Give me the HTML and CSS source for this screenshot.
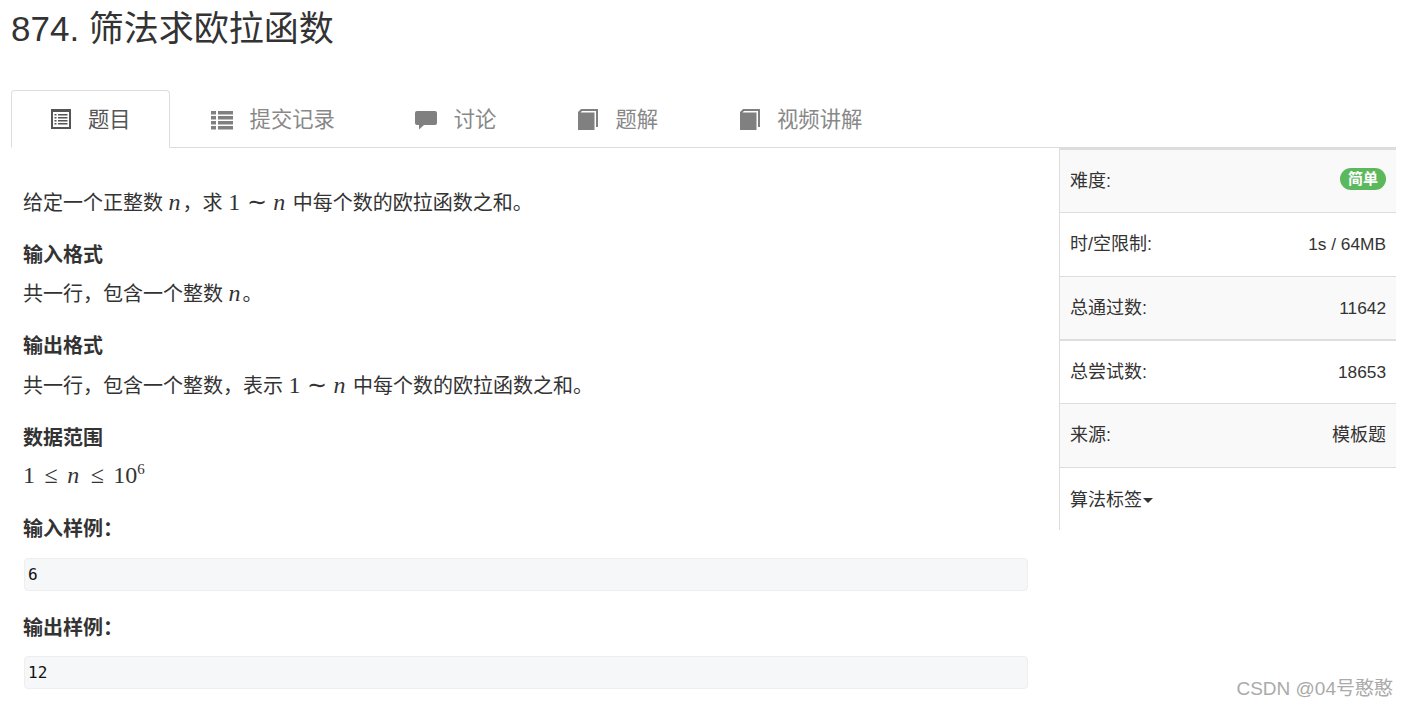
FILE: index.html
```html
<!DOCTYPE html>
<html lang="zh-CN">

<head>
    <meta charset="UTF-8">
    <title>874. 筛法求欧拉函数</title>
    <link rel="stylesheet" href="styles.css">
</head>

<body>
    <h1 class="title">874. 筛法求欧拉函数</h1>

    <ul class="tabs">
        <li class="tab active">
            <svg class="icon" viewBox="0 0 22 22"><path fill-rule="evenodd" d="M2 1h20v20H2zM4 4v15h16V4zM5.5 6h2v1.6h-2zM9 6h9.500v1.600H9zM5.500 9h2v1.600h-2zM9 9h9.500v1.600H9zM5.500 12h2v1.600h-2zM9 12h9.500v1.600H9zM5.500 15h2v1.600h-2zM9 15h9.500v1.600H9z"/></svg>
            题目
        </li>
        <li class="tab">
            <svg class="icon" viewBox="0 0 22 22"><path d="M0 3h5v3.600H0zM7 3h15v3.600H7zM0 8h5v3.600H0zM7 8h15v3.600H7zM0 13h5v3.600H0zM7 13h15v3.600H7zM0 18h5v3.600H0zM7 18h15v3.600H7z"/></svg>
            提交记录
        </li>
        <li class="tab">
            <svg class="icon" viewBox="0 0 22 22"><path d="M2 3h18a2 2 0 0 1 2 2v10a2 2 0 0 1-2 2H9l-5 4.500V17H2a2 2 0 0 1-2-2V5a2 2 0 0 1 2-2z"/></svg>
            讨论
        </li>
        <li class="tab">
            <svg class="icon" viewBox="0 0 22 22"><path d="M2 22V4l3-3h17v18h-2V3H6L4.500 4.500h14V22z"/></svg>
            题解
        </li>
        <li class="tab">
            <svg class="icon" viewBox="0 0 22 22"><path d="M2 22V4l3-3h17v18h-2V3H6L4.500 4.500h14V22z"/></svg>
            视频讲解
        </li>
    </ul>

    <div class="content">
        <div class="problem">
            <p class="first">给定一个正整数 <span class="math"><i>n</i></span>，求 <span class="math">1 ∼ <i>n</i></span> 中每个数的欧拉函数之和。</p>

            <h4>输入格式</h4>
            <p>共一行，包含一个整数 <span class="math"><i>n</i></span>。</p>

            <h4 class="wide">输出格式</h4>
            <p>共一行，包含一个整数，表示 <span class="math">1 ∼ <i>n</i></span> 中每个数的欧拉函数之和。</p>

            <h4 class="tight">数据范围</h4>
            <p class="range"><span class="math">1 ≤ <i>n</i> ≤ 10<sup>6</sup></span></p>

            <h4>输入样例：</h4>
            <pre class="sample">6</pre>

            <h4 class="after-sample">输出样例：</h4>
            <pre class="sample">12</pre>
        </div>

        <div class="info">
            <div class="row"><span>难度:</span><span class="badge">简单</span></div>
            <div class="row"><span>时/空限制:</span><span class="num">1s / 64MB</span></div>
            <div class="row"><span>总通过数:</span><span class="num">11642</span></div>
            <div class="row thick"><span>总尝试数:</span><span class="num">18653</span></div>
            <div class="row"><span>来源:</span><span>模板题</span></div>
            <div class="row last"><span>算法标签<span class="caret"></span></span></div>
        </div>
    </div>

    <div class="watermark">CSDN @04号憨憨</div>
</body>

</html>
```

FILE: styles.css
```css
* {
    box-sizing: border-box;
}

body {
    margin: 0;
    padding: 0 12px 0 11px;
    height: 707px;
    overflow: hidden;
    background-color: white;
    color: #333;
    font-family: "Liberation Sans", "Noto Sans CJK SC", sans-serif;
    font-size: 20px;
}

.title {
    margin: 0;
    height: 90px;
    padding-top: 9px;
    font-size: 35px;
    line-height: 40px;
    font-weight: 400;
}

.tabs {
    display: flex;
    margin: 0;
    padding: 0;
    height: 58px;
    list-style: none;
    border-bottom: 1px solid #ddd;
}

.tab {
    display: flex;
    align-items: center;
    gap: 17px;
    height: 58px;
    margin-right: 2px;
    padding: 0 39px 3px;
    font-size: 21.3px;
    color: #888;
    white-space: nowrap;
}

.tab.active {
    height: 58px;
    padding: 0 38px 3px 37px;
    background-color: white;
    color: #555;
    border: 1px solid #ddd;
    border-bottom-color: white;
    border-radius: 4px 4px 0 0;
}

.icon {
    width: 22px;
    height: 22px;
    margin-top: 2px;
    flex-shrink: 0;
    fill: #808080;
}

.active .icon {
    fill: #555;
}

.content {
    display: flex;
    justify-content: space-between;
}

.problem {
    width: 1048px;
    padding: 40px 31px 0 13px;
}

p {
    margin: 0 0 22px -1px;
    line-height: 30px;
}

p.range {
    margin-bottom: 23px;
}

h4 {
    margin: 0 0 9px -1px;
    font-size: 20px;
    line-height: 30px;
    font-weight: 700;
}

h4.wide {
    margin-bottom: 10px;
}

h4.tight {
    margin-bottom: 8px;
}

.after-sample {
    margin-top: 22px;
    margin-bottom: 13px;
}

.math {
    font-family: "Liberation Serif", serif;
    font-size: 24px;
    line-height: 0;
    word-spacing: 0.5px;
}

.math i {
    letter-spacing: 2px;
}

.range .math {
    word-spacing: 3.5px;
}

.math sup {
    font-size: 15px;
    line-height: 0;
}

.sample {
    margin: 14px 0 0;
    height: 33px;
    padding: 0 3px;
    background-color: #f6f7f8;
    border: 1px solid #eee;
    border-radius: 4px;
    color: #111;
    font-family: "DejaVu Sans Mono", monospace;
    font-size: 16px;
    line-height: 31px;
}

.after-sample + .sample {
    margin-top: 0;
}

.info {
    width: 337px;
    height: 382px;
    border-left: 1px solid #ddd;
    border-top: 2px solid #ddd;
    font-size: 18px;
    line-height: 26px;
}

.row {
    display: flex;
    justify-content: space-between;
    align-items: center;
    height: 64px;
    padding: 0 10px 1px 10px;
    border-bottom: 1px solid #ddd;
}

.row:nth-child(odd) {
    background-color: #f9f9f9;
}

.row:first-child {
    height: 63px;
}

.row:nth-child(3) {
    border-bottom-width: 2px;
}

.row.thick {
    height: 63px;
}

.row.last {
    border-bottom: none;
    background-color: white;
}

.num {
    font-size: 17.3px;
}

.badge {
    display: block;
    margin-top: -4px;
    width: 46px;
    height: 22px;
    border-radius: 11px;
    background-color: #5cb85c;
    color: white;
    font-size: 15px;
    font-weight: 700;
    line-height: 21px;
    text-align: center;
}

.caret {
    display: inline-block;
    margin-left: 1px;
    vertical-align: middle;
    border-top: 5px solid #333;
    border-left: 5px solid transparent;
    border-right: 5px solid transparent;
}

.watermark {
    position: absolute;
    right: 15px;
    top: 675px;
    font-size: 19px;
    line-height: 28px;
    color: #aaa;
}
```
